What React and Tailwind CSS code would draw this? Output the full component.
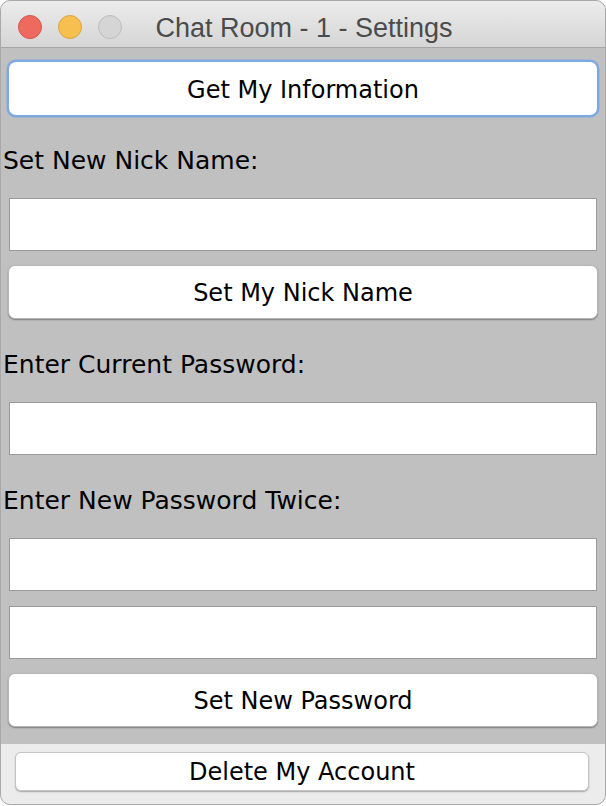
import React from 'react';

function MacButton({ children, focused, className = '' }) {
  return (
    <button
      type="button"
      className={
        'mx-[7px] flex items-center justify-center pt-[2px] rounded-[7px] bg-white text-black text-[24px] shadow-[0_1px_1.5px_rgba(0,0,0,0.35)] ' +
        (focused ? 'ring-[2.5px] ring-[#7ea9e0] ' : 'border-[0.5px] border-[#b5b5b5] ') +
        className
      }
    >
      {children}
    </button>
  );
}

function Field() {
  return <div className="mx-[8px] h-[53px] bg-white border border-[#9a9a9a]" />;
}

function Label({ children }) {
  return (
    <div className="h-[83px] pl-[2px] pt-[32px]">
      <span className="block leading-[28px] text-[25px] text-black">{children}</span>
    </div>
  );
}

export default function App() {
  return (
    <div className="w-[606px] h-[806px] bg-white" style={{ fontFamily: '"DejaVu Sans", "Noto Sans", sans-serif' }}>
      <div className="h-[805px] flex flex-col rounded-[10px] overflow-hidden border border-[#a9a9a9] bg-[#c0c0c0]">
        {/* title bar */}
        <div className="relative h-[47px] shrink-0 flex items-center pt-[6px] bg-gradient-to-b from-[#ececec] to-[#d5d5d5] border-b border-[#a6a6a6]">
          <div className="flex gap-[16px] pl-[17px]">
            <span className="w-[24px] h-[24px] rounded-full bg-[#ee6a5f] border border-[#d5554a]" />
            <span className="w-[24px] h-[24px] rounded-full bg-[#f6bf50] border border-[#dba542]" />
            <span className="w-[24px] h-[24px] rounded-full bg-[#d5d5d5] border border-[#bdbdbd]" />
          </div>
          <div
            className="absolute inset-0 flex items-center justify-center pt-[8px] pl-[2px] text-[27px] text-[#4b4b4b]"
            style={{ fontFamily: '"Liberation Sans", Arial, sans-serif' }}
          >
            Chat Room - 1 - Settings
          </div>
        </div>

        {/* content */}
        <div className="flex-1 flex flex-col pt-[14px]">
          <MacButton focused className="h-[53px] mx-[8px]">Get My Information</MacButton>
          <Label>Set New Nick Name:</Label>
          <Field />
          <div className="h-[14px]" />
          <MacButton className="h-[54px]">Set My Nick Name</MacButton>
          <Label>Enter Current Password:</Label>
          <Field />
          <Label>Enter New Password Twice:</Label>
          <Field />
          <div className="h-[15px]" />
          <Field />
          <div className="h-[14px]" />
          <MacButton className="h-[54px]">Set New Password</MacButton>
        </div>

        {/* bottom bar */}
        <div className="h-[60px] shrink-0 bg-[#ececec] pt-[8px]">
          <button
            type="button"
            className="mx-[14px] w-[574px] h-[39px] flex items-center justify-center rounded-[6px] bg-white border-[0.5px] border-[#c4c4c4] shadow-[0_1px_1.5px_rgba(0,0,0,0.3)] text-[24px] text-black"
          >
            Delete My Account
          </button>
        </div>
      </div>
    </div>
  );
}
